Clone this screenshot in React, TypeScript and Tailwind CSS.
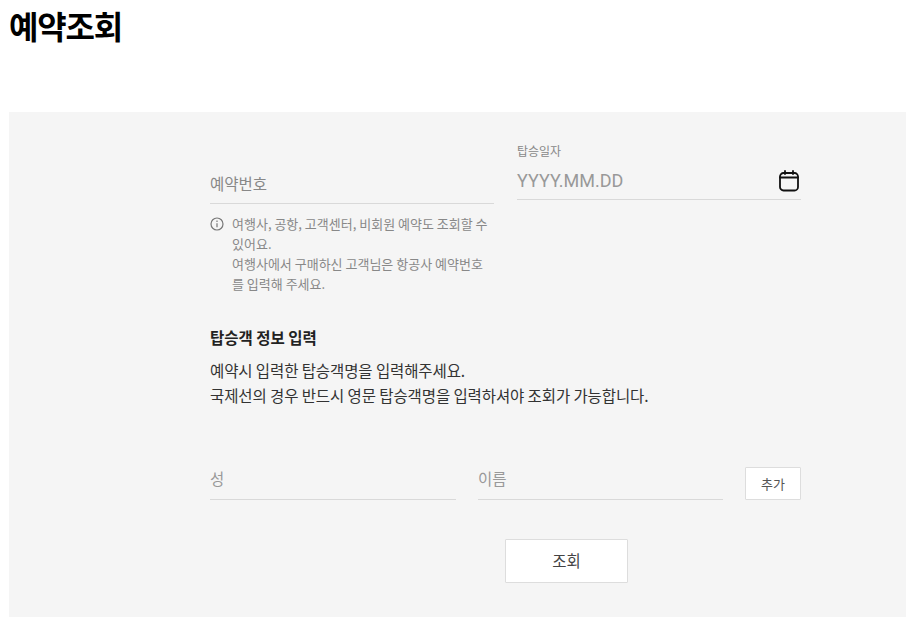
const font = { fontFamily: '"Noto Sans CJK KR", "Noto Sans", sans-serif' };

export default function App() {
  return (
    <div className="min-h-[618px] w-[906px] overflow-hidden bg-white text-[#222]" style={font}>
      <h1 className="ml-[9px] h-[112px] pt-[3px] text-[32px] leading-[44px] font-bold tracking-[-1.2px] text-black">예약조회</h1>
      <section className="ml-[9px] h-[505px] bg-[#f5f5f5] pt-[30px] pl-[201px] pr-[105px]">
        <div className="flex items-start gap-[23px]">
          <div className="w-[284px] pt-[20px]">
            <div className="h-[42px] border-b border-[#d9d9d9] pt-[9px] text-[15.5px] leading-[24px] text-[#888]">예약번호</div>
            <div className="mt-[10px] flex text-[13px] leading-[20px] text-[#888]">
              <svg className="mt-[3px] mr-[8px] w-[14px] h-[14px] shrink-0" viewBox="0 0 14 14" fill="none" stroke="#777" strokeWidth="1.2">
                <circle cx="7" cy="7" r="6" />
                <path d="M7 6.2v4M7 3.6v1.3" />
              </svg>
              <p className="w-[262px] break-all">
                여행사, 공항, 고객센터, 비회원 예약도 조회할 수 있어요.
                <br />
                여행사에서 구매하신 고객님은 항공사 예약번호를 입력해 주세요.
              </p>
            </div>
          </div>
          <div className="w-[284px]">
            <div className="h-[18px] text-[12px] leading-[18px] text-[#888]">탑승일자</div>
            <div className="mt-[2px] flex h-[38px] items-center justify-between border-b border-[#d9d9d9]">
              <span className="text-[18px] text-[#999]" style={{ fontFamily: '"Roboto", sans-serif' }}>YYYY.MM.DD</span>
              <svg className="mr-[2px] w-[20px] h-[22px]" viewBox="0 0 20 22" fill="none" stroke="#111" strokeWidth="1.8" strokeLinecap="round">
                <rect x="1" y="3" width="18" height="17.5" rx="3.5" />
                <path d="M1 7.5h18M6 1v3M14 1v3" />
              </svg>
            </div>
          </div>
        </div>
        <h2 className="mt-[31px] text-[15.5px] leading-[24px] font-bold text-[#222]">탑승객 정보 입력</h2>
        <p className="mt-[9px] text-[15.5px] leading-[25px] tracking-[-0.1px] text-[#333]">
          예약시 입력한 탑승객명을 입력해주세요.
          <br />
          국제선의 경우 반드시 영문 탑승객명을 입력하셔야 조회가 가능합니다.
        </p>
        <div className="mt-[48px] flex items-end">
          <div className="h-[44px] w-[246px] border-b border-[#d9d9d9] pt-[10px] text-[15.5px] leading-[24px] text-[#999]">성</div>
          <div className="ml-[22px] h-[44px] w-[245px] border-b border-[#d9d9d9] pt-[10px] text-[15.5px] leading-[24px] text-[#999]">이름</div>
          <button className="ml-[22px] h-[33px] w-[56px] rounded-[1px] border border-[#ddd] bg-white text-[13px] text-[#555]">추가</button>
        </div>
        <div className="mt-[39px] flex">
          <button className="ml-[295px] h-[44px] w-[123px] rounded-[1px] border border-[#ddd] bg-white text-[15.5px] text-[#444]">조회</button>
        </div>
      </section>
    </div>
  );
}
